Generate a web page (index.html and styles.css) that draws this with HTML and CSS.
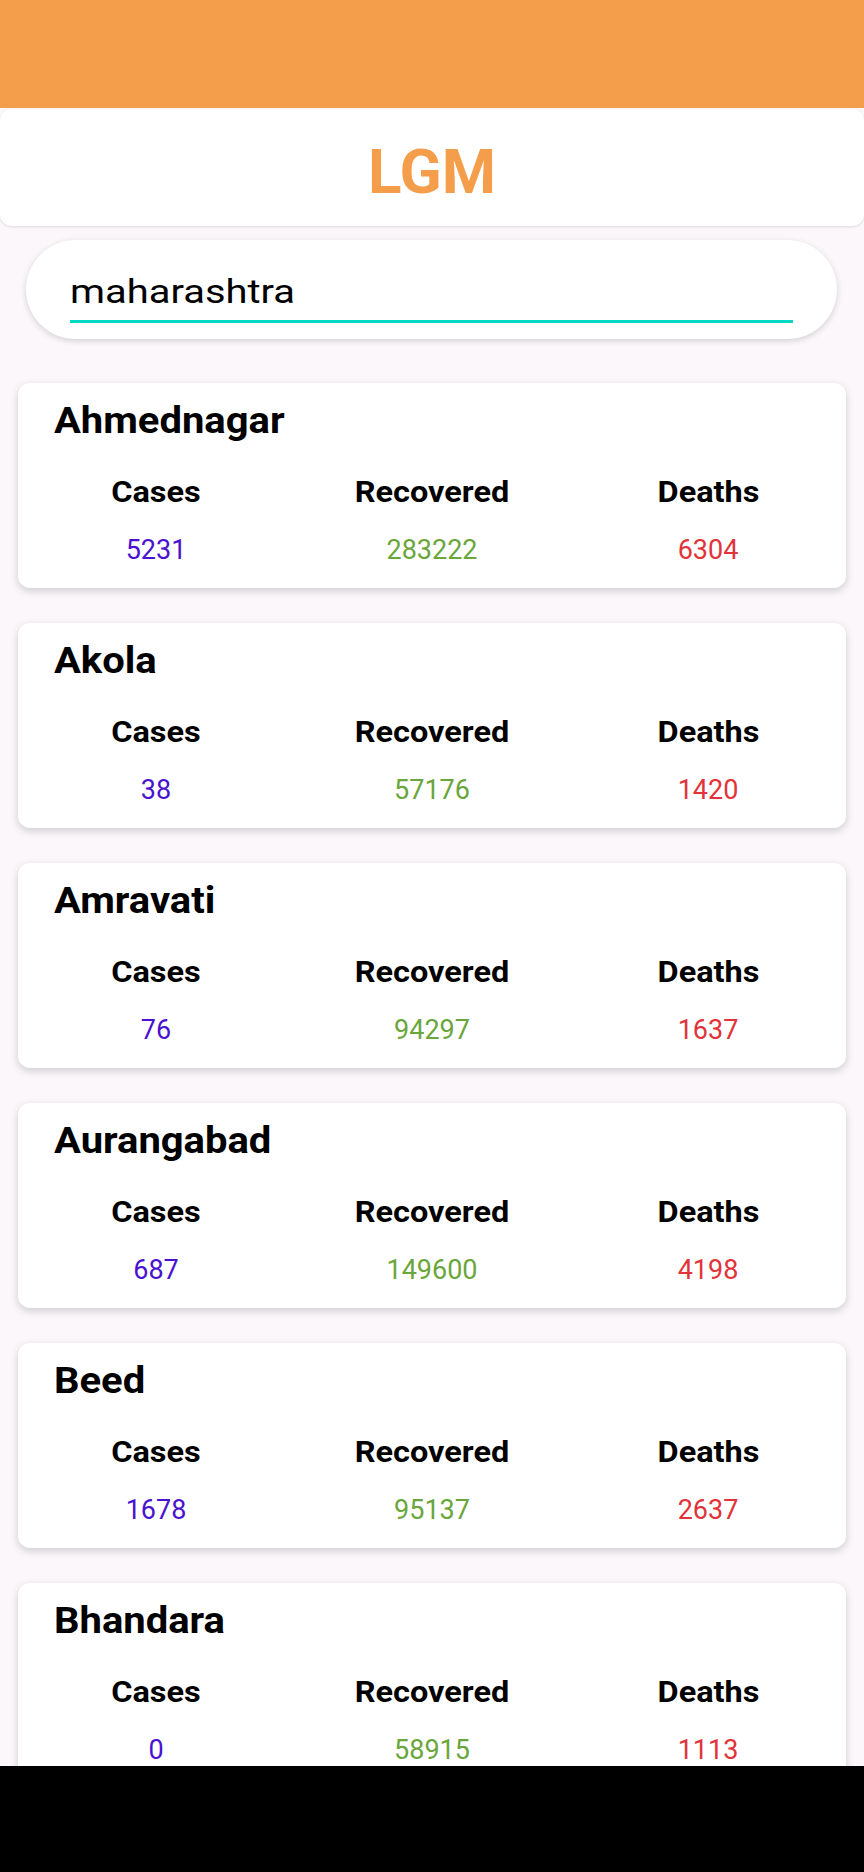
FILE: index.html
```html
<!DOCTYPE html>
<html>
<head>
<meta charset="utf-8">
<link rel="stylesheet" href="styles.css">
</head>
<body>
<div class="topbar"></div>
<header class="brand"><h1 class="brand-title">LGM</h1></header>
<div class="search">
  <div class="search-field"><span class="search-text">maharashtra</span></div>
</div>
<main class="list">
  <section class="card">
    <h2 class="district"><span class="wide-l">Ahmednagar</span></h2>
    <div class="stats">
      <div class="stat"><div class="label"><span class="wide-c">Cases</span></div><div class="val cases">5231</div></div>
      <div class="stat"><div class="label"><span class="wide-c">Recovered</span></div><div class="val rec">283222</div></div>
      <div class="stat"><div class="label"><span class="wide-c">Deaths</span></div><div class="val death">6304</div></div>
    </div>
  </section>
  <section class="card">
    <h2 class="district"><span class="wide-l">Akola</span></h2>
    <div class="stats">
      <div class="stat"><div class="label"><span class="wide-c">Cases</span></div><div class="val cases">38</div></div>
      <div class="stat"><div class="label"><span class="wide-c">Recovered</span></div><div class="val rec">57176</div></div>
      <div class="stat"><div class="label"><span class="wide-c">Deaths</span></div><div class="val death">1420</div></div>
    </div>
  </section>
  <section class="card">
    <h2 class="district"><span class="wide-l">Amravati</span></h2>
    <div class="stats">
      <div class="stat"><div class="label"><span class="wide-c">Cases</span></div><div class="val cases">76</div></div>
      <div class="stat"><div class="label"><span class="wide-c">Recovered</span></div><div class="val rec">94297</div></div>
      <div class="stat"><div class="label"><span class="wide-c">Deaths</span></div><div class="val death">1637</div></div>
    </div>
  </section>
  <section class="card">
    <h2 class="district"><span class="wide-l">Aurangabad</span></h2>
    <div class="stats">
      <div class="stat"><div class="label"><span class="wide-c">Cases</span></div><div class="val cases">687</div></div>
      <div class="stat"><div class="label"><span class="wide-c">Recovered</span></div><div class="val rec">149600</div></div>
      <div class="stat"><div class="label"><span class="wide-c">Deaths</span></div><div class="val death">4198</div></div>
    </div>
  </section>
  <section class="card">
    <h2 class="district"><span class="wide-l">Beed</span></h2>
    <div class="stats">
      <div class="stat"><div class="label"><span class="wide-c">Cases</span></div><div class="val cases">1678</div></div>
      <div class="stat"><div class="label"><span class="wide-c">Recovered</span></div><div class="val rec">95137</div></div>
      <div class="stat"><div class="label"><span class="wide-c">Deaths</span></div><div class="val death">2637</div></div>
    </div>
  </section>
  <section class="card">
    <h2 class="district"><span class="wide-l">Bhandara</span></h2>
    <div class="stats">
      <div class="stat"><div class="label"><span class="wide-c">Cases</span></div><div class="val cases">0</div></div>
      <div class="stat"><div class="label"><span class="wide-c">Recovered</span></div><div class="val rec">58915</div></div>
      <div class="stat"><div class="label"><span class="wide-c">Deaths</span></div><div class="val death">1113</div></div>
    </div>
  </section>
</main>
<div class="navbar"></div>
</body>
</html>
```
FILE: styles.css
```css
html, body {
  margin: 0;
  padding: 0;
}
body {
  background: #fcf7fb;
  font-family: Roboto, "Noto Sans", sans-serif;
  color: #000;
  height: 1872px;
  overflow: hidden;
}
.topbar {
  height: 108px;
  background: #f49e4c;
}
.brand {
  margin-top: 1px;
  height: 117px;
  box-sizing: border-box;
  padding-top: 27px;
  background: #fff;
  border-radius: 12px;
  box-shadow: 0 1px 3px rgba(0,0,0,0.12);
}
.brand-title {
  margin: 0;
  text-align: center;
  font-size: 62px;
  line-height: 72px;
  font-weight: 700;
  color: #f49e4c;
}
.search {
  margin: 14px 27px 0 26px;
  height: 99px;
  box-sizing: border-box;
  background: #fff;
  border-radius: 50px;
  box-shadow: 0 2px 6px rgba(0,0,0,0.16);
  padding: 0 44px;
  display: flex;
  align-items: flex-start;
}
.search-field {
  flex: 1;
  margin-top: 32px;
  border-bottom: 3px solid #03dac5;
  height: 48px;
}
.search-text {
  display: inline-block;
  font-size: 33px;
  line-height: 40px;
  color: #000;
  transform: scaleX(1.21);
  transform-origin: left center;
}
.list {
  padding: 44px 18px 0 18px;
  display: flex;
  flex-direction: column;
  gap: 35px;
}
.card {
  background: #fff;
  border-radius: 12px;
  box-shadow: 0 3px 8px rgba(0,0,0,0.18);
  padding: 18px 0 22px 0;
  height: 205px;
  box-sizing: border-box;
}
.district {
  margin: 0 0 0 36px;
  font-size: 36px;
  line-height: 40px;
  font-weight: 700;
}
.wide-l {
  display: inline-block;
  transform: scaleX(1.11);
  transform-origin: left center;
}
.wide-c {
  display: inline-block;
  transform: scaleX(1.12);
  transform-origin: center center;
}
.stats {
  display: grid;
  grid-template-columns: 1fr 1fr 1fr;
  margin-top: 34px;
}
.stat {
  text-align: center;
}
.label {
  font-size: 29px;
  line-height: 34px;
  font-weight: 700;
}
.val {
  margin-top: 25px;
  font-size: 27px;
  line-height: 32px;
}
.cases { color: #4a12d0; }
.rec { color: #6aa63c; }
.death { color: #e2333a; }
.navbar {
  position: fixed;
  left: 0;
  right: 0;
  bottom: 0;
  height: 106px;
  background: #000;
}
```
